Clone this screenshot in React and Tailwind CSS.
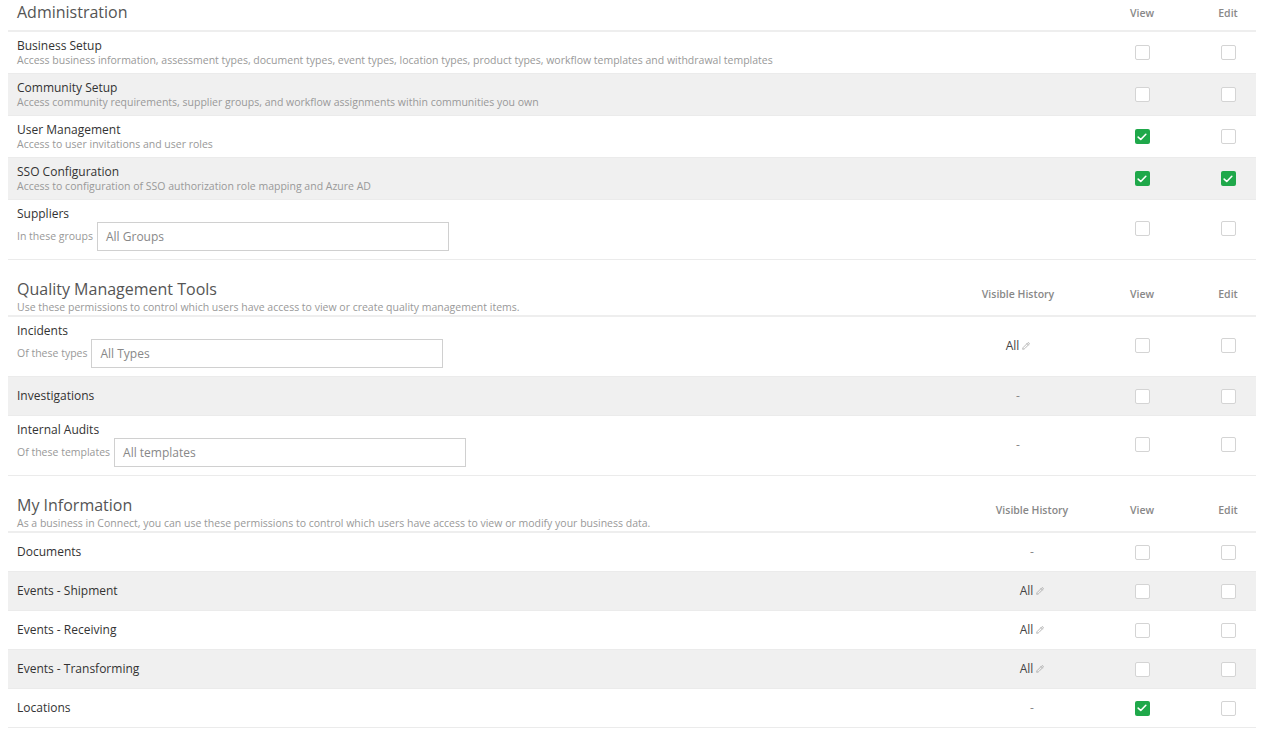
import { Pencil } from 'lucide-react';

const FONT = { fontFamily: '"Open Sans", "Noto Sans", Arial, sans-serif' };

// permission data per section
const ADMIN_ROWS = [
  {
    title: 'Business Setup',
    desc: 'Access business information, assessment types, document types, event types, location types, product types, workflow templates and withdrawal templates',
    view: false,
    edit: false,
  },
  {
    title: 'Community Setup',
    desc: 'Access community requirements, supplier groups, and workflow assignments within communities you own',
    view: false,
    edit: false,
  },
  { title: 'User Management', desc: 'Access to user invitations and user roles', view: true, edit: false },
  {
    title: 'SSO Configuration',
    desc: 'Access to configuration of SSO authorization role mapping and Azure AD',
    view: true,
    edit: true,
  },
  { title: 'Suppliers', filter: { label: 'In these groups', value: 'All Groups' }, view: false, edit: false },
];

const QUALITY_ROWS = [
  { title: 'Incidents', filter: { label: 'Of these types', value: 'All Types' }, history: 'All', view: false, edit: false },
  { title: 'Investigations', history: '-', view: false, edit: false },
  {
    title: 'Internal Audits',
    filter: { label: 'Of these templates', value: 'All templates' },
    history: '-',
    view: false,
    edit: false,
  },
];

const INFO_ROWS = [
  { title: 'Documents', history: '-', view: false, edit: false },
  { title: 'Events - Shipment', history: 'All', view: false, edit: false },
  { title: 'Events - Receiving', history: 'All', view: false, edit: false },
  { title: 'Events - Transforming', history: 'All', view: false, edit: false },
  { title: 'Locations', history: '-', view: true, edit: false },
];

function Checkbox({ checked }) {
  if (checked) {
    return (
      <span className="flex h-[15px] w-[15px] items-center justify-center rounded-[2px] bg-[#1fa84a]">
        <svg width="10" height="8" viewBox="0 0 11 9" fill="none">
          <path d="M1.2 4.6 L4.1 7.3 L9.8 1.4" stroke="white" strokeWidth="1.8" strokeLinecap="round" strokeLinejoin="round" />
        </svg>
      </span>
    );
  }
  return <span className="block h-[15px] w-[15px] rounded-[2px] border border-[#d4d4d4] bg-white" />;
}

function History({ value }) {
  if (value === 'All') {
    return (
      <span className="flex items-center gap-[3px] text-[12px] text-[#444]">
        All
        <Pencil size={8} className="text-[#aaa]" strokeWidth={2.5} />
      </span>
    );
  }
  return <span className="text-[12px] text-[#888]">-</span>;
}

function ColumnLabel({ children, className }) {
  return (
    <div className={`flex justify-center text-[10.5px] font-semibold leading-[14px] text-[#888] ${className}`}>
      {children}
    </div>
  );
}

function SectionHeader({ title, desc, historyWidth }) {
  // top section sits flush with the page, later ones get breathing room
  if (!desc) {
    return (
      <div className="flex h-[32px] items-start border-b-2 border-[#eeeeee] pl-[9px]">
        <div className="flex-1 pt-[2px] text-[16px] font-medium leading-[20px] text-[#555]">{title}</div>
        <ColumnLabel className="w-[60px] pt-[6px]">View</ColumnLabel>
        <ColumnLabel className="ml-[28px] w-[56px] pt-[6px]">Edit</ColumnLabel>
      </div>
    );
  }
  return (
    <div className="flex items-end border-b-2 border-[#eeeeee] pl-[9px] pt-[19px] pb-[1px]">
      <div className="flex-1">
        <div className="text-[16px] font-medium leading-[20px] text-[#555]">{title}</div>
        <div className="mt-[1px] text-[10.5px] leading-[14px] text-[#999]">{desc}</div>
      </div>
      <ColumnLabel className={`pb-[13px] ${historyWidth}`}>Visible History</ColumnLabel>
      <ColumnLabel className="w-[60px] pb-[13px]">View</ColumnLabel>
      <ColumnLabel className="ml-[28px] w-[56px] pb-[13px]">Edit</ColumnLabel>
    </div>
  );
}

function Row({ row, shaded, historyWidth }) {
  const single = !row.desc && !row.filter;
  return (
    <div
      className={`flex items-center border-b border-[#ebebeb] pl-[9px] ${shaded ? 'bg-[#f0f0f0]' : 'bg-white'} ${
        single ? 'h-[39px]' : row.filter ? 'pt-[6px] pb-[8px]' : 'h-[42px]'
      }`}
    >
      <div className="flex-1">
        <div className="text-[12px] leading-[16px] text-[#333]">{row.title}</div>
        {row.desc && <div className="text-[10.5px] leading-[13px] text-[#999]">{row.desc}</div>}
        {row.filter && (
          <div className="flex items-center gap-[4px]">
            <span className="text-[10.5px] text-[#999]">{row.filter.label}</span>
            <div className="flex h-[29px] w-[352px] items-center border border-[#d0d0d0] bg-white px-[8px] text-[12px] text-[#888]">
              {row.filter.value}
            </div>
          </div>
        )}
      </div>
      {historyWidth && (
        <div className={`flex justify-center ${historyWidth}`}>
          <History value={row.history} />
        </div>
      )}
      <div className="flex w-[60px] justify-center">
        <Checkbox checked={row.view} />
      </div>
      <div className="ml-[28px] flex w-[56px] justify-center">
        <Checkbox checked={row.edit} />
      </div>
    </div>
  );
}

export default function App() {
  return (
    <div className="min-h-screen bg-white pl-[8px] pr-[13px]" style={FONT}>
      <SectionHeader title="Administration" />
      {ADMIN_ROWS.map((row, i) => (
        <Row key={row.title} row={row} shaded={i % 2 === 1} />
      ))}

      <SectionHeader
        title="Quality Management Tools"
        desc="Use these permissions to control which users have access to view or create quality management items."
        historyWidth="w-[188px]"
      />
      {QUALITY_ROWS.map((row, i) => (
        <Row key={row.title} row={row} shaded={i % 2 === 1} historyWidth="w-[188px]" />
      ))}

      <SectionHeader
        title="My Information"
        desc="As a business in Connect, you can use these permissions to control which users have access to view or modify your business data."
        historyWidth="w-[160px]"
      />
      {INFO_ROWS.map((row, i) => (
        <Row key={row.title} row={row} shaded={i % 2 === 1} historyWidth="w-[160px]" />
      ))}
    </div>
  );
}
